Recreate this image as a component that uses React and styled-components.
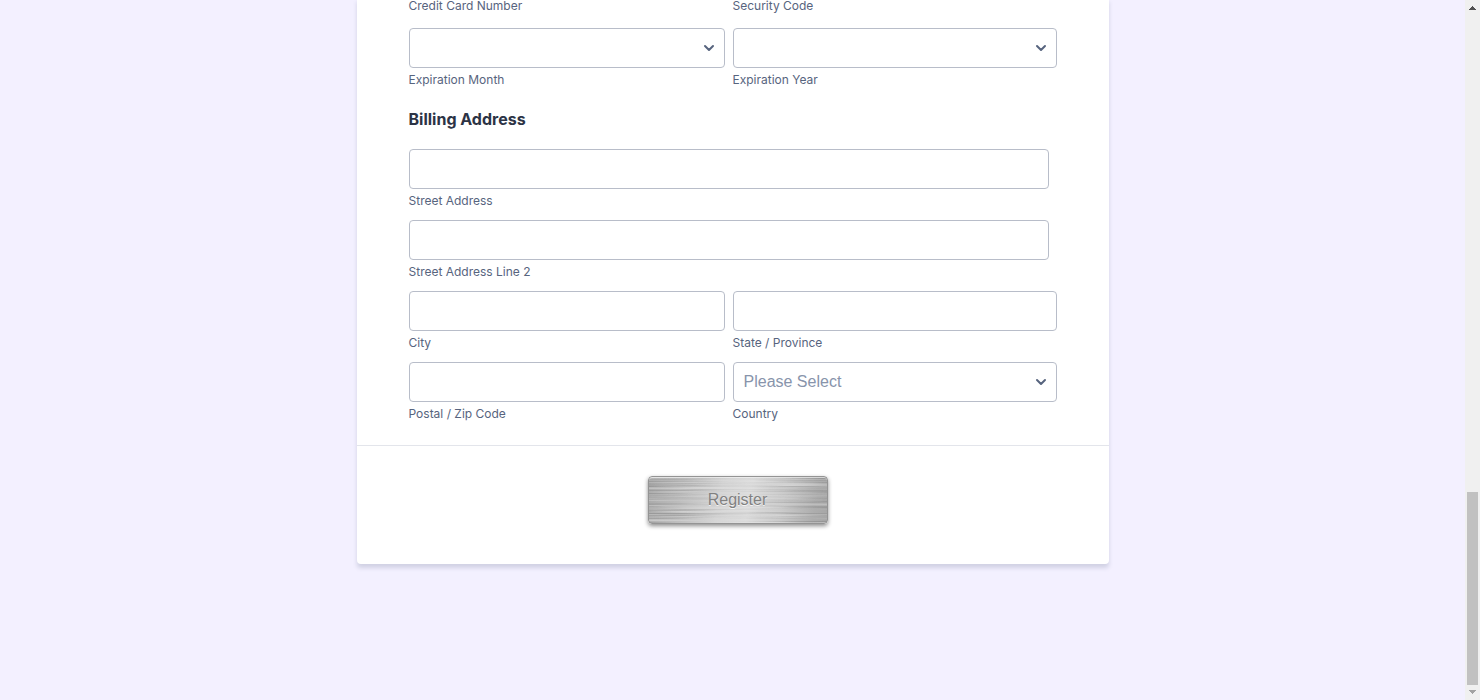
import React from "react";
import styled, { createGlobalStyle } from "styled-components";

const GlobalStyle = createGlobalStyle`
  *, *::before, *::after { box-sizing: border-box; }
  body {
    margin: 0;
    background: #f3f0ff;
    color: #2c3345;
    font-family: Inter, "Liberation Sans", sans-serif;
  }
`;

const Page = styled.div`
  display: grid;
  grid-template-columns: minmax(0, 1fr) 15px;
  min-height: 100vh;
`;

const Main = styled.main`
  padding: 0 16px;
`;

const Card = styled.form`
  max-width: 752px;
  margin: 0 auto;
  background: #fff;
  border-radius: 0 0 4px 4px;
  box-shadow: 0 4px 4px rgba(87, 100, 126, 0.21);
`;

const Fields = styled.div`
  padding: 0 52px 24px;
`;

const Row = styled.div`
  display: grid;
  grid-template-columns: minmax(0, 316fr) minmax(0, 324fr);
  column-gap: 8px;
  margin-bottom: ${(p) => p.$gap || 12}px;
  &:last-child { margin-bottom: 0; }
`;

const PaymentSection = styled.section`
  margin-top: -2px;
`;

const BillingSection = styled.section`
  margin-top: 22px;
`;

const Field = styled.div`
  display: flex;
  flex-direction: column;
  ${(p) => p.$wide && "grid-column: 1 / -1; padding-right: 8px;"}
`;

const Label = styled.label`
  margin-top: 4px;
  font-size: 12px;
  line-height: 15px;
  color: #57647e;
`;

const TopLabel = styled.p`
  margin: 0;
  font-size: 12px;
  line-height: 15px;
  color: #57647e;
`;

const Input = styled.input`
  width: 100%;
  height: 40px;
  padding: 0 10px;
  border: 1px solid #b8bdc9;
  border-radius: 4px;
  background: #fff;
  font: 16px "Liberation Sans", sans-serif;
  color: #2c3345;
`;

const SelectWrap = styled.div`
  position: relative;
  height: 40px;
`;

const Select = styled(Input).attrs({ as: "select" })`
  appearance: none;
  padding: 0 32px 2px 10px;
  color: #8894ab;
`;

const Chevron = styled.svg`
  position: absolute;
  right: 10px;
  top: 16px;
  width: 12px;
  height: 8px;
  pointer-events: none;
`;

const Heading = styled.h2`
  margin: 0 0 20px;
  font-size: 16px;
  line-height: 20px;
  font-weight: 700;
`;

const Footer = styled.div`
  display: flex;
  justify-content: center;
  padding: 30px 0 40px 10px;
  border-top: 1px solid #e3e5eb;
`;

const MetalButton = styled.button`
  position: relative;
  width: 180px;
  height: 48px;
  padding: 0;
  overflow: hidden;
  border: 1px solid #949494;
  border-radius: 4px;
  background: linear-gradient(100deg, #a9a9a9 0%, #bcbcbc 18%, #d6d6d6 40%, #dedede 56%, #cbcbcb 74%, #adadad 92%, #a6a6a6 100%);
  box-shadow: 0 2px 4px rgba(0, 0, 0, 0.45);
  font: 16px "Liberation Sans", sans-serif;
  color: #808080;
  text-shadow: 0 1px 0 rgba(255, 255, 255, 0.75);

  &::after {
    content: "";
    position: absolute;
    inset: 0;
    border-radius: 3px;
    box-shadow: inset 0 1px 0 rgba(255, 255, 255, 0.6);
  }
`;

const Texture = styled.svg`
  position: absolute;
  inset: 0;
  width: 100%;
  height: 100%;
  mask-image: linear-gradient(90deg, #000 0%, #000 20%, rgba(0, 0, 0, 0.3) 45%, rgba(0, 0, 0, 0.3) 55%, #000 80%);
`;

const Caption = styled.span`
  position: relative;
`;

const ScrollTrack = styled.div`
  display: flex;
  flex-direction: column;
  align-items: center;
  height: 100vh;
  background: #f0f0f0;
`;

const Arrow = styled.svg`
  flex: none;
  width: 15px;
  height: 15px;
`;

const ThumbSpace = styled.div`
  flex: 477 0 0;
`;

const Thumb = styled.div`
  flex: 193 0 0;
  width: 11px;
  background: #c1c1c1;
`;

function TextField({ id, label, wide }) {
  return (
    <Field $wide={wide}>
      <Input id={id} type="text" />
      <Label htmlFor={id}>{label}</Label>
    </Field>
  );
}

function SelectField({ id, label, placeholder = "" }) {
  return (
    <Field>
      <SelectWrap>
        <Select id={id} defaultValue="">
          <option value="">{placeholder}</option>
        </Select>
        <Chevron viewBox="0 0 12 8" aria-hidden="true">
          <path d="M2 2 L6 6 L10 2" fill="none" stroke="#57647e" strokeWidth="2" strokeLinecap="round" strokeLinejoin="round" />
        </Chevron>
      </SelectWrap>
      <Label htmlFor={id}>{label}</Label>
    </Field>
  );
}

export default function App() {
  return (
    <>
      <GlobalStyle />
      <Page>
        <Main>
          <Card onSubmit={(e) => e.preventDefault()}>
            <Fields>
              <PaymentSection>
                <Row $gap={15}>
                  <TopLabel>Credit Card Number</TopLabel>
                  <TopLabel>Security Code</TopLabel>
                </Row>
                <Row>
                  <SelectField id="month" label="Expiration Month" />
                  <SelectField id="year" label="Expiration Year" />
                </Row>
              </PaymentSection>
              <BillingSection>
                <Heading>Billing Address</Heading>
                <Row>
                  <TextField id="street" label="Street Address" wide />
                </Row>
                <Row>
                  <TextField id="street2" label="Street Address Line 2" wide />
                </Row>
                <Row>
                  <TextField id="city" label="City" />
                  <TextField id="state" label="State / Province" />
                </Row>
                <Row>
                  <TextField id="zip" label="Postal / Zip Code" />
                  <SelectField id="country" label="Country" placeholder="Please Select" />
                </Row>
              </BillingSection>
            </Fields>
            <Footer>
              <MetalButton type="submit">
                <Texture aria-hidden="true">
                  <filter id="brushed" x="0" y="0" width="100%" height="100%" colorInterpolationFilters="sRGB">
                    <feTurbulence type="fractalNoise" baseFrequency="0.008 0.45" numOctaves="2" seed="8" />
                    <feColorMatrix values="0 0 0 0 0.35  0 0 0 0 0.35  0 0 0 0 0.35  2.6 0 0 0 -1.15" />
                  </filter>
                  <filter id="shine" x="0" y="0" width="100%" height="100%" colorInterpolationFilters="sRGB">
                    <feTurbulence type="fractalNoise" baseFrequency="0.008 0.4" numOctaves="2" seed="21" />
                    <feColorMatrix values="0 0 0 0 1  0 0 0 0 1  0 0 0 0 1  2.6 0 0 0 -1.15" />
                  </filter>
                  <rect width="100%" height="100%" filter="url(#brushed)" opacity="0.4" />
                  <rect width="100%" height="100%" filter="url(#shine)" opacity="0.4" />
                </Texture>
                <Caption>Register</Caption>
              </MetalButton>
            </Footer>
          </Card>
        </Main>
        <ScrollTrack aria-hidden="true">
          <Arrow viewBox="0 0 15 15" shapeRendering="crispEdges">
            <path d="M7 6h1v1h1v1h1v1h1v1h-7v-1h1v-1h1v-1h1z" fill="#505050" />
          </Arrow>
          <ThumbSpace />
          <Thumb />
          <Arrow viewBox="0 0 15 15" shapeRendering="crispEdges">
            <path d="M4 5h7v1h-1v1h-1v1h-1v1h-1v-1h-1v-1h-1v-1h-1z" fill="#a3a3a3" />
          </Arrow>
        </ScrollTrack>
      </Page>
    </>
  );
}
